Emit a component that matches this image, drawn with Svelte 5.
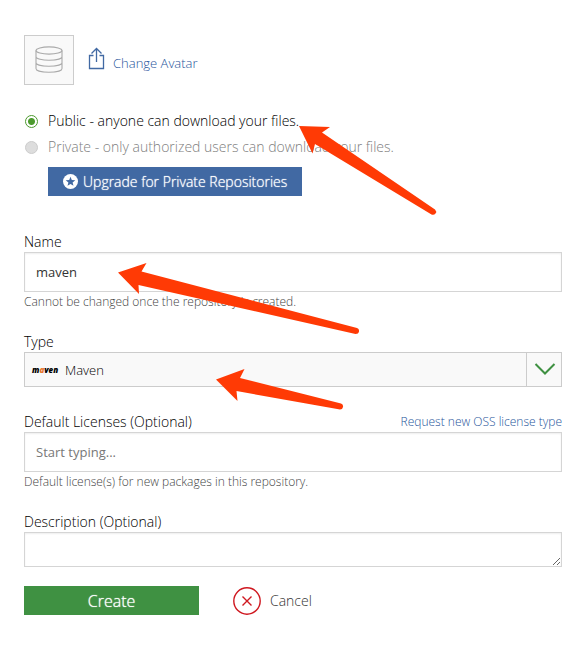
<script>
  let visibility = $state('public');
  let name = $state('maven');
  let type = $state('maven');
  let licenses = $state('');
  let description = $state('');
</script>

<main>
  <form onsubmit={(event) => event.preventDefault()}>
    <div class="avatar-row">
      <div class="avatar">
        <svg width="30" height="30" viewBox="0 0 30 30" fill="none" stroke="#aaa" stroke-width="1.1">
          <ellipse cx="15" cy="5.500" rx="13" ry="3.600" />
          <path d="M2 5.500v18c0 5 26 5 26 0V5.500M2 11.500c0 5 26 5 26 0M2 17.500c0 5 26 5 26 0" />
        </svg>
      </div>
      <a class="change" href="#avatar">
        <svg width="17" height="24" viewBox="0 0 17 24" fill="none" stroke="#4169a3" stroke-width="1.3">
          <path d="M5.500 8.500H1.500V21.500H15.500V8.500H11.500M8.500 15V1.500M3.500 6.500l5-5 5 5" />
        </svg>
        <span>Change Avatar</span>
      </a>
    </div>

    <div class="options">
      <label class="option">
        <input type="radio" name="visibility" value="public" bind:group={visibility} />
        <span>Public - anyone can download your files.</span>
      </label>
      <label class="option off">
        <input type="radio" name="visibility" value="private" bind:group={visibility} disabled />
        <span>Private - only authorized users can download your files.</span>
      </label>
      <button class="upgrade" type="button">
        <svg width="15" height="15" viewBox="0 0 15 15">
          <circle cx="7.500" cy="7.500" r="7.500" fill="#fff" />
          <path d="M7.500 2.800l1.300 3.200 3.500.2-2.700 2.200.9 3.400-3-1.900-3 1.900.9-3.400-2.700-2.200 3.500-.2z" fill="#4169a3" />
        </svg>
        <span>Upgrade for Private Repositories</span>
      </button>
    </div>

    <div class="field">
      <label for="name">Name</label>
      <input id="name" class="text" type="text" bind:value={name} />
      <p class="help">Cannot be changed once the repository is created.</p>
    </div>

    <div class="field type">
      <label for="type">Type</label>
      <div class="select">
        <select id="type" bind:value={type}>
          <option value="maven">Maven</option>
        </select>
        <span class="logo" aria-hidden="true">m<i>a</i>ven</span>
        <span class="toggle">
          <svg width="22" height="13" viewBox="0 0 22 13" fill="none" stroke="#3f9142" stroke-width="2">
            <path d="M1.500 1l9.500 9.500 9.500-9.500" />
          </svg>
        </span>
      </div>
    </div>

    <div class="field">
      <div class="heading">
        <label for="licenses">Default Licenses (Optional)</label>
        <a href="#license">Request new OSS license type</a>
      </div>
      <input id="licenses" class="text" type="text" placeholder="Start typing..." bind:value={licenses} />
      <p class="help">Default license(s) for new packages in this repository.</p>
    </div>

    <div class="field last">
      <label for="description">Description (Optional)</label>
      <textarea id="description" bind:value={description}></textarea>
    </div>

    <div class="actions">
      <button class="create" type="submit">Create</button>
      <button class="cancel" type="button">
        <svg width="28" height="28" viewBox="0 0 28 28" fill="none" stroke="#cf1820" stroke-width="1.400">
          <circle cx="14" cy="14" r="13.200" />
          <path d="M9.500 9.500l9 9M18.500 9.500l-9 9" />
        </svg>
        <span>Cancel</span>
      </button>
    </div>
  </form>

  <svg class="arrows" width="583" height="647" viewBox="0 0 583 647" fill="#ff3a05" aria-hidden="true">
    <path d="M299 126L330 127L322 132.500L435 209.500Q437 211.500 435.500 213.500T431.500 214.500L315 144L312.500 153.500Z" />
    <path d="M118 272.500L146.500 263L141.500 271.500L357 328Q359.500 329 359 331.500T355.500 334L138.500 285L139 294Z" />
    <path d="M216 379.500L244.500 369L240 378L341 403.500Q343.500 404.500 343 407T340 409.500L236.500 391L237.500 401Z" />
  </svg>
</main>

<style>
  :global(body) {
    margin: 0;
    background: #fff;
  }
  main {
    position: relative;
    overflow: hidden;
    font: 300 14px/20px "Open Sans", sans-serif;
    color: #000;
  }
  form {
    padding: 35px 21px 32px 24px;
  }
  svg {
    display: block;
    flex: none;
  }
  button,
  input,
  select,
  textarea {
    box-sizing: border-box;
    margin: 0;
    border-radius: 0;
    font: inherit;
    color: inherit;
  }
  a {
    color: #27559b;
    text-decoration: none;
    font-size: 13px;
  }
  p {
    margin: 0;
  }
  .avatar-row {
    display: flex;
    gap: 14px;
    margin-bottom: 23px;
  }
  .avatar {
    box-sizing: border-box;
    display: grid;
    place-items: center;
    width: 50px;
    height: 50px;
    border: 1px solid #ccc;
    background: #f9f9f9;
  }
  .change {
    display: flex;
    gap: 8px;
    padding-top: 12px;
  }
  .change span {
    padding-top: 6px;
  }
  .option {
    display: flex;
    align-items: center;
    gap: 10px;
    height: 26px;
  }
  .option input {
    appearance: none;
    width: 13px;
    height: 13px;
    margin-left: 1px;
    border: 1px solid #4c9a2e;
    border-radius: 50%;
    background: radial-gradient(circle, #4c9a2e 3px, #fff 4px);
  }
  .option.off {
    color: #808080;
  }
  .option.off input {
    border-color: #ccc;
    background: #ddd;
  }
  .upgrade {
    display: flex;
    align-items: center;
    gap: 5px;
    height: 29px;
    margin: 7px 0 36px 24px;
    padding: 0 15px;
    border: 0;
    background: #4169a3;
    color: #fff;
    text-shadow: 0 0 1px #fff;
  }
  .field {
    display: flex;
    flex-direction: column;
    margin-bottom: 20px;
  }
  .type {
    margin-bottom: 25px;
  }
  .last {
    margin-bottom: 19px;
  }
  .heading {
    display: flex;
    justify-content: space-between;
  }
  .heading a {
    font-size: 12px;
  }
  .text {
    height: 40px;
    padding: 0 11px;
    border: 1px solid #d5d5d5;
    background: #fff;
    box-shadow: inset 0 1px 2px #eee;
    color: #333;
    font-size: 13px;
    font-weight: 400;
  }
  .text::placeholder {
    color: #777;
    opacity: 1;
  }
  .help {
    color: #444;
    font-size: 12px;
  }
  .select {
    position: relative;
  }
  select {
    appearance: none;
    display: block;
    width: 100%;
    height: 35px;
    padding: 0 40px;
    border: 1px solid #ccc;
    background: #f9f9f9;
    font-size: 13px;
  }
  .logo {
    position: absolute;
    top: 8px;
    left: 8px;
    font-size: 8px;
    font-weight: 800;
    font-style: italic;
    pointer-events: none;
  }
  .logo i {
    color: #e8762c;
  }
  .toggle {
    position: absolute;
    top: 0;
    right: 0;
    bottom: 0;
    display: grid;
    place-items: center;
    width: 35px;
    border-left: 1px solid #ccc;
    pointer-events: none;
  }
  textarea {
    height: 35px;
    padding: 6px 11px;
    border: 1px solid #d5d5d5;
    background: #fff;
    box-shadow: inset 0 1px 2px #eee;
  }
  .actions {
    display: flex;
    align-items: center;
    gap: 34px;
  }
  .create {
    width: 175px;
    height: 29px;
    border: 0;
    background: #3f9142;
    color: #fff;
    font-size: 16px;
    text-shadow: 0 0 1px #fff;
  }
  .cancel {
    display: flex;
    align-items: center;
    gap: 9px;
    padding: 0;
    border: 0;
    background: none;
    color: #333;
  }
  .arrows {
    position: absolute;
    top: 0;
    left: 0;
    pointer-events: none;
  }
</style>
